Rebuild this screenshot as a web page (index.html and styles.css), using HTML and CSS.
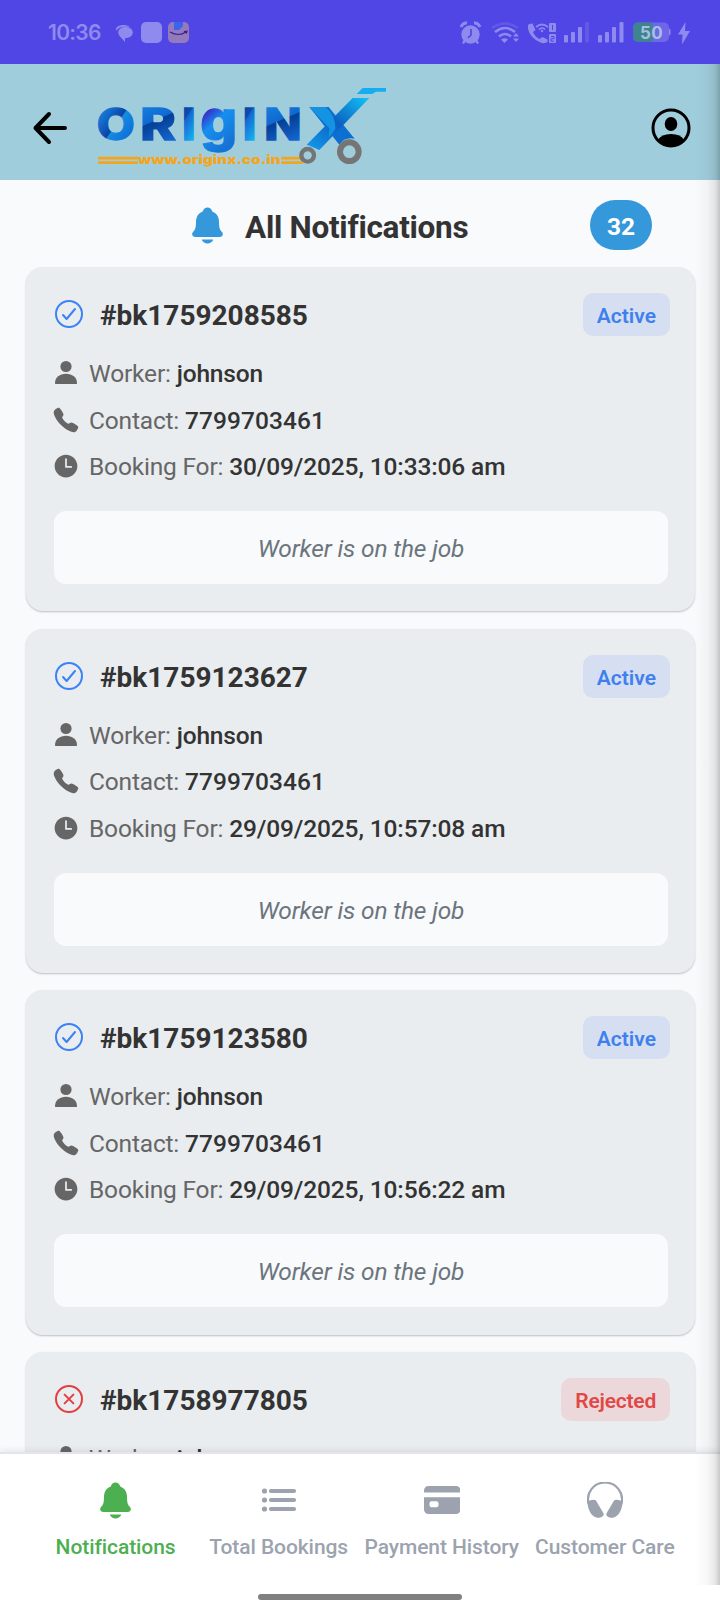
FILE: index.html
```html
<!DOCTYPE html>
<html lang="en">
<head>
<meta charset="utf-8">
<title>All Notifications</title>
<link rel="stylesheet" href="styles.css">
</head>
<body>
<svg class="defs" width="0" height="0">
  <symbol id="check" viewBox="0 0 512 512"><g fill="none" stroke="currentColor" stroke-width="32" stroke-linecap="round" stroke-linejoin="round"><circle cx="256" cy="256" r="208"/><path d="M352 176L217.600 336 160 272"/></g></symbol>
  <symbol id="reject" viewBox="0 0 512 512"><g fill="none" stroke="currentColor" stroke-width="32" stroke-linecap="round" stroke-linejoin="round"><circle cx="256" cy="256" r="208"/><path d="M326 186L186 326M326 326L186 186"/></g></symbol>
  <symbol id="person" viewBox="0 0 24 24"><circle cx="12" cy="6.500" r="5.600"/><path d="M1 23.200C1 17.500 6 14 12 14s11 3.500 11 9.200c0 1-.6 1.800-1.600 1.800H2.600C1.600 25 1 24.200 1 23.200z" transform="translate(0 -.2)"/></symbol>
  <symbol id="call" viewBox="0 0 512 512"><path d="M391 480c-19.520 0-46.940-7.060-88-30-49.930-28-88.550-53.850-138.210-103.380C116.910 298.770 93.610 267.790 61 208.450c-36.840-67-30.560-102.120-23.540-117.130C45.820 73.380 58.160 62.650 74.110 52a176.300 176.300 0 0128.640-15.200c1-.43 1.930-.84 2.760-1.210 4.950-2.230 12.450-5.600 21.950-2 6.340 2.380 12 7.250 20.860 16 18.170 17.920 43 57.830 52.160 77.430 6.150 13.210 10.220 21.930 10.230 31.710 0 11.450-5.760 20.280-12.750 29.810-1.310 1.790-2.610 3.500-3.870 5.160-7.610 10-9.280 12.890-8.180 18.050 2.230 10.370 18.860 41.240 46.190 68.510s57.310 42.850 67.720 45.070c5.380 1.150 8.330-.59 18.650-8.470 1.480-1.130 3-2.300 4.590-3.470 10.660-7.930 19.080-13.540 30.260-13.540h.06c9.730 0 18.060 4.220 31.860 11.180 18 9.080 59.110 33.590 77.140 51.780 8.770 8.840 13.660 14.480 16.050 20.810 3.600 9.530.21 17-2 22-.37.83-.78 1.740-1.210 2.750a176.490 176.490 0 01-15.290 28.580c-10.630 15.900-21.400 28.210-39.380 36.580A67.420 67.420 0 01391 480z"/></symbol>
  <symbol id="time" viewBox="0 0 512 512"><path d="M256 48C141.130 48 48 141.130 48 256s93.130 208 208 208 208-93.130 208-208S370.870 48 256 48zm96 240h-96a16 16 0 01-16-16V128a16 16 0 0132 0v128h80a16 16 0 010 32z"/></symbol>
  <symbol id="bell" viewBox="0 0 512 512"><path d="M440.080 341.310c-1.660-2-3.290-4-4.890-5.930-22-26.610-35.310-42.670-35.310-118 0-39-9.330-71-27.720-95-13.560-17.730-31.890-31.180-56.050-41.120a3 3 0 01-.82-.67C306.600 51.490 282.820 32 256 32s-50.590 19.490-59.280 48.560a3.130 3.130 0 01-.81.65c-56.380 23.210-83.780 67.740-83.780 136.140 0 75.360-13.290 91.420-35.310 118-1.600 1.930-3.230 3.890-4.890 5.930a35.160 35.160 0 00-4.650 37.620c6.170 13 19.320 21.070 34.330 21.070H410.500c14.940 0 28-8.060 34.190-21a35.170 35.170 0 00-4.610-37.660zM256 480a80.060 80.060 0 0070.440-42.130 4 4 0 00-3.540-5.870H189.120a4 4 0 00-3.550 5.870A80.060 80.060 0 00256 480z"/></symbol>
  <symbol id="list" viewBox="0 0 36 36"><circle cx="3.500" cy="9" r="2.600"/><circle cx="3.500" cy="18" r="2.600"/><circle cx="3.500" cy="27" r="2.600"/><path d="M10 9H33M10 18H33M10 27H33" stroke="currentColor" stroke-width="4.200" stroke-linecap="round"/></symbol>
  <symbol id="card" viewBox="0 0 36 36"><path d="M0 10.500V8.500a4.500 4.500 0 014.500-4.500h27.500a4.500 4.500 0 014.500 4.500V10.500zM0 15.300H36.500V27.500a4.500 4.500 0 01-4.500 4.500H4.500A4.500 4.500 0 010 27.500zM7.500 19.200a2 2 0 00-2 2v2a2 2 0 002 2h5a2 2 0 002-2v-2a2 2 0 00-2-2z" fill-rule="evenodd"/></symbol>
  <symbol id="care" viewBox="0 0 36 36"><path d="M1.600 22A17 17 0 1134.400 22" fill="none" stroke="currentColor" stroke-width="2.200"/><path d="M.6 19.500C3 17.900 6.800 17 8.800 18.200L16.600 31.500C17.600 34.500 13 36.500 9.300 35.600 4 34.200.2 26 .6 19.500zM35.400 19.500C33 17.900 29.200 17 27.200 18.200L19.400 31.500C18.400 34.500 23 36.500 26.700 35.600 32 34.200 35.800 26 35.400 19.500z"/></symbol>
</svg>
<div class="screen">
  <div class="statusbar">
    <span class="clock">10:36</span>
    <svg class="status-left" width="76" height="22" viewBox="0 0 76 22">
      <path d="M0 9C-1 5 3 3 8 3c3 0 5 1 6 2-6-1-12 0-14 4z" fill="#8f8aee"/><ellipse cx="9.500" cy="10.500" rx="7.300" ry="5.700" fill="#8f8aee"/><path d="M3.500 14l5.500 6V14z" fill="#8f8aee"/>
      <rect x="25" y="0" width="21" height="21" rx="5" fill="#8f8aee"/>
      <rect x="52" y="0" width="21" height="21" rx="5" fill="#9479bd"/><path d="M58 0h9v4l-4 4h-5z" fill="#3b63ee"/><path d="M54 10q8.500 5 16 0M68 9.500l3-.3-.7 2.500" fill="none" stroke="#33248a" stroke-width="1.200"/>
    </svg>
    <svg class="status-right" width="232" height="24" viewBox="0 0 232 24">
      <circle cx="11.500" cy="12.500" r="9.200"/><path d="M2 5q2-4.500 6-4M21 5q-2-4.500-6-4" fill="none" stroke="#8f8aee" stroke-width="3"/><path d="M6 18l-2 3.500M17 18l2 3.500" stroke="#8f8aee" stroke-width="2.500"/><path d="M12 7v6l-3 3" fill="none" stroke="#4f46e5" stroke-width="1.600"/>
      <g fill="none" stroke="#8f8aee" stroke-width="2.600"><path d="M33 6q13-9 26 0" stroke="#6259e8"/><path d="M36 10q10-8 20 0M40 14.500q6-5 12 0"/></g><path d="M42 17.500q4-2.500 7 0l-3.500 3.500zM54 14.500l3-3.500 3 3.500zM54 16.500l3 3.500 3-3.500z"/>
      <path d="M70 2l3.500-.5 3 6.500-2.500 2q2 5 6.500 7l3-2 5 2.500v2.500q-3 2-7 .5Q71 16 69 7q-.5-4 1-5z"/><path d="M77 5q6-5 12 0M80 7.500q3.500-3 6 0" fill="none" stroke="#8f8aee" stroke-width="1.700"/><circle cx="83" cy="9" r="1.200"/>
      <rect x="90" y="1" width="7" height="9" rx="1"/><rect x="90" y="12" width="7" height="9" rx="1"/><path d="M93.500 3v5M92 14.500h3v2.200h-3v2.500h3" fill="none" stroke="#4f46e5" stroke-width="1"/>
      <rect x="105" y="13" width="4" height="7.500" rx="1"/><rect x="112" y="10" width="4" height="10.500" rx="1"/><rect x="119" y="5" width="4" height="15.500" rx="1"/><rect x="126" y="0" width="4" height="20.500" rx="1" fill="#6259e8"/>
      <rect x="139" y="13" width="4" height="7.500" rx="1"/><rect x="146" y="10" width="4" height="10.500" rx="1"/><rect x="153" y="5" width="4" height="15.500" rx="1"/><rect x="160.500" y="0" width="4" height="20.500" rx="1"/>
      <path d="M179 0.500h26a5 5 0 015 5V15a5 5 0 01-5 5h-26a5 5 0 01-5-5V5.500a5 5 0 015-5z" fill="#6f66e9"/><path d="M179 .5h14.500v19.500H179a5 5 0 01-5-5V5.500a5 5 0 015-5z" fill="#3f838f"/><path d="M210 6.500l1.500 1v5l-1.500 1z"/>
      <text x="192.500" y="16.500" text-anchor="middle" class="battery">50</text>
      <path d="M226.500 0l-7.500 12.500h4.500l-.5 10L231 9h-5z"/>
    </svg>
  </div>
  <header class="appbar">
    <svg class="back" width="34" height="34" viewBox="0 0 34 34"><path d="M32 17H2.500M16 3L2.500 17L16 31" fill="none" stroke="#000" stroke-width="4" stroke-linecap="round" stroke-linejoin="round"/></svg>
    <svg class="logo" width="320" height="104" viewBox="0 0 960 312">
      <defs>
        <linearGradient id="blue" x1="0" y1="0" x2="1" y2="1"><stop offset="0" stop-color="#1b9be6"/><stop offset=".3" stop-color="#126bcb"/><stop offset=".5" stop-color="#0b43a3"/><stop offset=".52" stop-color="#168be0"/><stop offset="1" stop-color="#0a5bd3"/></linearGradient>
        <linearGradient id="deep" x1="0" y1="0" x2=".3" y2="1"><stop offset="0" stop-color="#178be2"/><stop offset=".5" stop-color="#0f68d2"/><stop offset=".52" stop-color="#043f94"/><stop offset="1" stop-color="#1668d6"/></linearGradient>
        <linearGradient id="bar" x1="0" y1="0" x2=".4" y2="1"><stop offset="0" stop-color="#063b99"/><stop offset=".42" stop-color="#0b4eb0"/><stop offset=".45" stop-color="#1268d2"/><stop offset="1" stop-color="#18b6f2"/></linearGradient>
        <linearGradient id="violet" x1="0" y1="0" x2=".5" y2="1"><stop offset="0" stop-color="#3813ae"/><stop offset=".35" stop-color="#3c22c3"/><stop offset=".6" stop-color="#168ff0"/><stop offset="1" stop-color="#1673d5"/></linearGradient>
        <linearGradient id="frame" x1="1" y1="0" x2="0" y2="1"><stop offset="0" stop-color="#12c4f7"/><stop offset=".5" stop-color="#0c5fc0"/><stop offset="1" stop-color="#129ff0"/></linearGradient>
      </defs>
      <g class="wordmark"><text x="50" y="191" fill="url(#blue)" stroke="url(#blue)" textLength="114" lengthAdjust="spacingAndGlyphs">O</text><text x="181" y="191" fill="url(#deep)" stroke="url(#deep)" textLength="107" lengthAdjust="spacingAndGlyphs">R</text><text x="306" y="191" fill="url(#bar)" stroke="url(#bar)" textLength="41" lengthAdjust="spacingAndGlyphs">I</text><text x="361" y="191" fill="url(#violet)" stroke="url(#violet)" class="bowl" textLength="111" lengthAdjust="spacingAndGlyphs">g</text><text x="488" y="191" fill="url(#bar)" stroke="url(#bar)" textLength="41" lengthAdjust="spacingAndGlyphs">I</text><text x="553" y="191" fill="url(#deep)" stroke="url(#deep)" textLength="112" lengthAdjust="spacingAndGlyphs">N</text></g>
      <path d="M688 93h58l78 95q-30-6-46 18z" fill="#0d6fd0"/>
      <path d="M818 66h50L718 222l-28-12-10-4z" fill="url(#frame)"/>
      <path d="M688 93h50q30 30 28 66l-20 26 2-28z" fill="#1493e3"/>
      <path d="M848 36h70v11h-30l-12 7h-46z" fill="#14aef0"/>
      <path d="M54 246.500h120M54 260h120M604 246.500h56M604 260h64" stroke="#f5a51c" stroke-width="8"/>
      <text x="174" y="264" class="site" textLength="428" lengthAdjust="spacingAndGlyphs">www.originx.co.in</text>
      <circle cx="683" cy="238" r="19" fill="none" stroke="#757575" stroke-width="13"/><circle cx="808" cy="227" r="28" fill="none" stroke="#757575" stroke-width="18"/>
    </svg>
    <svg class="profile" width="40" height="40" viewBox="0 0 40 40"><circle cx="20" cy="20" r="18" fill="none" stroke="#000" stroke-width="3"/><ellipse cx="20" cy="16" rx="6.300" ry="7"/><path d="M7 32q3-6 13-6t13 6q-5 7-13 7t-13-7z"/></svg>
  </header>
  <div class="heading">
    <svg class="heading-bell"><use href="#bell"/></svg>
    <h1>All Notifications</h1>
    <span class="count">32</span>
  </div>
  <main class="cards">
    <article class="card">
      <div class="card-head"><svg class="state active"><use href="#check"/></svg><h2>#bk1759208585</h2><span class="badge active">Active</span></div>
      <div class="row"><svg class="worker"><use href="#person"/></svg><span>Worker: <b>johnson</b></span></div>
      <div class="row"><svg class="phone"><use href="#call"/></svg><span>Contact: <b class="number">7799703461</b></span></div>
      <div class="row"><svg class="time"><use href="#time"/></svg><span>Booking For: <b class="date">30/09/2025, 10:33:06 am</b></span></div>
      <p class="message">Worker is on the job</p>
    </article>
    <article class="card">
      <div class="card-head"><svg class="state active"><use href="#check"/></svg><h2>#bk1759123627</h2><span class="badge active">Active</span></div>
      <div class="row"><svg class="worker"><use href="#person"/></svg><span>Worker: <b>johnson</b></span></div>
      <div class="row"><svg class="phone"><use href="#call"/></svg><span>Contact: <b class="number">7799703461</b></span></div>
      <div class="row"><svg class="time"><use href="#time"/></svg><span>Booking For: <b class="date">29/09/2025, 10:57:08 am</b></span></div>
      <p class="message">Worker is on the job</p>
    </article>
    <article class="card">
      <div class="card-head"><svg class="state active"><use href="#check"/></svg><h2>#bk1759123580</h2><span class="badge active">Active</span></div>
      <div class="row"><svg class="worker"><use href="#person"/></svg><span>Worker: <b>johnson</b></span></div>
      <div class="row"><svg class="phone"><use href="#call"/></svg><span>Contact: <b class="number">7799703461</b></span></div>
      <div class="row"><svg class="time"><use href="#time"/></svg><span>Booking For: <b class="date">29/09/2025, 10:56:22 am</b></span></div>
      <p class="message">Worker is on the job</p>
    </article>
    <article class="card">
      <div class="card-head"><svg class="state rejected"><use href="#reject"/></svg><h2>#bk1758977805</h2><span class="badge rejected">Rejected</span></div>
      <div class="row"><svg class="worker"><use href="#person"/></svg><span>Worker: <b>johnson</b></span></div>
    </article>
  </main>
  <nav class="tabs">
    <a class="tab current"><svg><use href="#bell"/></svg>Notifications</a>
    <a class="tab"><svg><use href="#list"/></svg>Total Bookings</a>
    <a class="tab"><svg><use href="#card"/></svg>Payment History</a>
    <a class="tab"><svg><use href="#care"/></svg>Customer Care</a>
  </nav>
  <div class="system"><span class="home"></span></div>
  <div class="edge-shade"></div>
</div>
</body>
</html>
```
FILE: styles.css
```css
* { box-sizing: border-box; }
body { margin: 0; font-family: Roboto, "Liberation Sans", sans-serif; color: #333; }
h1, h2, p { margin: 0; }
svg { display: block; flex: none; fill: currentColor; overflow: visible; }
.defs { position: absolute; }
.screen { position: relative; width: 720px; height: 1612px; overflow: hidden; display: flex; flex-direction: column; background: #f8fafc; }
.statusbar { flex: none; height: 64px; display: flex; background: #4f46e5; color: #8f8aee; padding: 22px 29px 0 48px; }
.clock { width: 68px; font: 600 21px/21px Inter, sans-serif; letter-spacing: -.7px; }
.status-right { margin-left: auto; }
.battery { font: 700 17px Inter, sans-serif; fill: #a6c1df; letter-spacing: .3px; }
.appbar { flex: none; height: 116px; display: flex; background: #a0cddc; color: #000; }
.back { margin: 47px 0 0 33px; }
.logo { margin: 12px 0 0 13px; }
.wordmark text { font: 800 131px Inter, sans-serif; stroke-width: 4px; }
.wordmark .bowl { font-size: 166px; }
.site { font: 900 37px Inter, sans-serif; fill: #f5a51c; }
.profile { margin: 44px 29px 0 auto; }
.heading { flex: none; height: 87px; display: flex; align-items: flex-start; padding: 20px 68px 0 189px; }
.heading-bell { width: 41px; height: 41px; margin: 4.500px 0 0 -2px; color: #3498db; }
.heading h1 { margin-left: 17px; font-size: 31.500px; line-height: 37px; font-weight: 700; padding-top: 9px; white-space: nowrap; letter-spacing: -.28px; }
.count { margin-left: auto; width: 62px; height: 50px; border-radius: 25px; background: #3498db; color: #fff; font-size: 24.500px; line-height: 53px; font-weight: 700; text-align: center; }
.cards { flex: 1; min-height: 0; overflow: hidden; display: flex; flex-direction: column; gap: 17.500px; padding: 0 25px 0 26px; }
.card { flex: none; height: 344.200px; border-radius: 17px; background: #e9edf0; padding: 26px 25px 0 28px; box-shadow: 0 1px 2px rgba(0,0,0,.24); }
.card-head { display: flex; align-items: flex-start; height: 43px; margin-bottom: 23px; }
.state { width: 32px; height: 32px; margin: 5px 0 0 -1px; }
.state.active { color: #3b82f6; }
.state.rejected { color: #e53e3e; }
.card-head h2 { margin: 6px 0 0 15px; font-size: 28px; line-height: 33px; font-weight: 700; }
.badge { margin-left: auto; height: 43px; border-radius: 10px; padding: 0 14px; font-size: 21px; line-height: 46px; font-weight: 600; }
.badge.active { background: #d5dff1; color: #4080ee; }
.badge.rejected { background: #ecd8da; color: #e04848; letter-spacing: -.22px; }
.row { height: 30px; margin-bottom: 16.500px; display: flex; align-items: flex-start; font-size: 24.500px; line-height: 30px; color: #666; white-space: nowrap; letter-spacing: -.18px; }
.row svg.worker { width: 24px; height: 24px; margin-top: 1px; }
.row svg.phone { width: 28px; height: 28px; margin: 0 -2px 0 -2px; }
.row svg.time { width: 28px; height: 28px; margin: 0 -2px 0 -2px; }
.row span { margin-left: 11px; }
.row b { font-weight: 500; color: #333; }
.row b.number { letter-spacing: .08px; }
.row b.date { letter-spacing: -.13px; }
.message { margin: 29px 2px 0 0; height: 73px; border-radius: 12px; background: #f8fafc; text-align: center; font-size: 24.500px; line-height: 75px; font-style: italic; letter-spacing: -.15px; color: #6c757d; }
.tabs { flex: none; height: 133px; display: grid; grid-template-columns: repeat(4, 163.100px); padding: 28px 34px 0; background: #fff; border-top: 2px solid #e4e5ea; box-shadow: 0 -2px 6px rgba(0,0,0,.08); }
.tab { display: flex; flex-direction: column; align-items: center; font-size: 21px; line-height: 25px; font-weight: 500; letter-spacing: -.08px; color: #9ca3af; white-space: nowrap; }
.tab svg { width: 36px; height: 36px; margin-bottom: 17px; }
.tab:first-child svg { width: 41px; height: 41px; margin: -2px 0 14px; }
.tab.current { color: #4caf50; }
.system { flex: none; height: 27px; background: #fff; display: flex; justify-content: center; padding-top: 9px; }
.home { width: 204px; height: 6px; border-radius: 3px; background: #808080; }
.edge-shade { position: absolute; right: 0; top: 64px; width: 25px; height: 1521px; background: linear-gradient(90deg, rgba(0,0,0,0), rgba(0,0,0,.03) 50%, rgba(0,0,0,.09) 80%, rgba(0,0,0,.22)); }
```
